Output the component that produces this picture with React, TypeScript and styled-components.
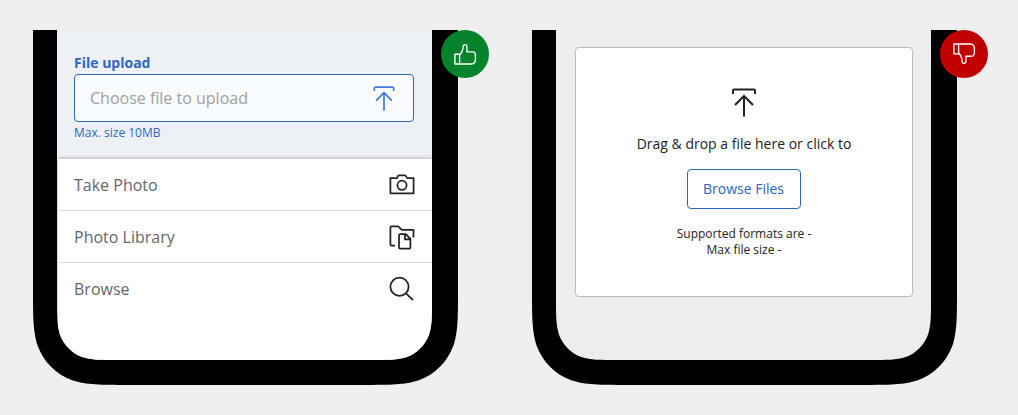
import React from "react";
import styled, { createGlobalStyle } from "styled-components";

const GlobalStyle = createGlobalStyle`
  * { box-sizing: border-box; }
  body { margin: 0; background: #efefef; font-family: "Open Sans", "Noto Sans", sans-serif; }
`;

/* Outline with square top corners and continuous-curvature bottom corners. */
const deviceOutline = (w: number, h: number, r: number) => {
  const p = (right: boolean, x: number, y: number) =>
    `${(right ? w - x * r : x * r).toFixed(2)} ${(h - y * r).toFixed(2)}`;
  return [
    `M0 0H${w}L${p(true, 0, 1.5287)}`,
    `C${p(true, 0, 1.0885)} ${p(true, 0, 0.8684)} ${p(true, 0.0749, 0.6315)}`,
    `C${p(true, 0.1691, 0.3728)} ${p(true, 0.3728, 0.1691)} ${p(true, 0.6315, 0.0749)}`,
    `C${p(true, 0.8684, 0)} ${p(true, 1.0885, 0)} ${p(true, 1.5287, 0)}`,
    `L${p(false, 1.5287, 0)}`,
    `C${p(false, 1.0885, 0)} ${p(false, 0.8684, 0)} ${p(false, 0.6315, 0.0749)}`,
    `C${p(false, 0.3728, 0.1691)} ${p(false, 0.1691, 0.3728)} ${p(false, 0.0749, 0.6315)}`,
    `C${p(false, 0, 0.8684)} ${p(false, 0, 1.0885)} ${p(false, 0, 1.5287)}Z`,
  ].join("");
};

const Page = styled.main`
  display: flex;
  gap: 74px;
  width: 1018px;
  height: 415px;
  padding: 30px 0 0 33px;
  background: #efefef;
`;

const Example = styled.section`
  position: relative;
  width: 425px;
  height: 355px;
`;

const Device = styled.div`
  width: 425px;
  height: 355px;
  padding: 0 26px 25px 24px;
  background: #000;
  clip-path: path("${deviceOutline(425, 355, 62)}");
`;

const Screen = styled.div<{ $bg: string }>`
  display: flex;
  flex-direction: column;
  width: 375px;
  height: 330px;
  background: ${(p) => p.$bg};
  clip-path: path("${deviceOutline(375, 330, 40)}");
`;

const Verdict = styled.div<{ $color: string }>`
  position: absolute;
  top: 0;
  right: -31px;
  display: grid;
  place-items: center;
  width: 48px;
  height: 48px;
  border-radius: 50%;
  background: ${(p) => p.$color};
`;

const Icon = styled.svg<{ $color: string; $weight?: number }>`
  display: block;
  flex: none;
  fill: none;
  stroke: ${(p) => p.$color};
  stroke-width: ${(p) => p.$weight ?? 1.75};
`;

const FieldArea = styled.div`
  height: 129px;
  padding: 23px 18px 0 17px;
  background: #edf1f6;
`;

const Label = styled.label`
  display: block;
  height: 21px;
  font-size: 14px;
  line-height: 20px;
  font-weight: 700;
  color: #2f66c1;
`;

const FileField = styled.div`
  display: flex;
  align-items: center;
  justify-content: space-between;
  height: 48px;
  padding: 0 15px;
  border: 1px solid #2f66c1;
  border-radius: 4px;
  background: #f8fcff;
  font-size: 16px;
  line-height: 24px;
  color: #a0a0a0;
`;

const Hint = styled.div`
  margin-top: 3px;
  font-size: 12px;
  line-height: 16px;
  color: #2f66c1;
`;

const Sheet = styled.ul`
  flex: 1;
  margin: 0 0 0 1px;
  padding: 0;
  list-style: none;
  background: #fff;
  box-shadow: 0 0 4px rgba(0, 0, 0, 0.4);
`;

const SheetRow = styled.li`
  display: flex;
  align-items: center;
  justify-content: space-between;
  height: 52px;
  padding: 0 17px 0 16px;
  border-bottom: 1px solid #dcdcdc;
  font-size: 16px;
  color: #666;
  &:last-child { border-bottom-color: transparent; }
`;

const DropCard = styled.div`
  display: flex;
  flex-direction: column;
  align-items: center;
  width: 338px;
  height: 250px;
  margin: 17px 0 0 19px;
  padding-top: 38px;
  border: 1px solid #bcbcbc;
  border-radius: 4px;
  background: #fff;
  color: #222;
`;

const Prompt = styled.p`
  margin: 16px 0 0;
  font-size: 14px;
  line-height: 20px;
`;

const BrowseButton = styled.button`
  width: 114px;
  height: 40px;
  margin: 15px 0 0;
  padding: 0 1px 0 0;
  border: 1px solid #2f66c1;
  border-radius: 4px;
  background: #fff;
  font: 14px/20px "Open Sans", "Noto Sans", sans-serif;
  color: #2f66c1;
`;

const Formats = styled.p`
  margin: 17px 0 0;
  font-size: 12px;
  line-height: 16px;
  text-align: center;
`;

const UploadIcon = ({ color, size, weight }: { color: string; size: number; weight: number }) => (
  <Icon $color={color} $weight={weight} width={size} height={size} viewBox="0 0 32 32">
    <path d="M5 8V4.5Q5 3.5 6 3.5H26Q27 3.5 27 4.5V8M16 30.6V10M7 19L16 10L25 19" />
  </Icon>
);

const ThumbIcon = ({ down }: { down?: boolean }) => (
  <Icon $color="#fff" $weight={1.35} width={24} height={24} viewBox="0 0 24 24" strokeLinejoin="round">
    <path
      transform={down ? "matrix(1 0 0 -1 0 24)" : undefined}
      d="M1.9 12.2H6.6V22H1.9ZM6.6 13.2C8.2 11.4 9.3 9.4 9.7 7.6C10.1 6.4 10 5.3 10.2 4Q10.4 2.6 12 2.6Q13.7 2.6 13.9 4.3V9.8H19.6Q22.6 10 22.4 13.4V17.5Q22.2 21.8 18.6 22H6.6"
    />
  </Icon>
);

const CameraIcon = () => (
  <Icon $color="#222" width={26} height={26} viewBox="0 0.5 26 26" strokeLinejoin="round">
    <path d="M1.4 6.5H7.8Q8.5 6.2 8.7 5Q9 3.8 10 3.8H15.8Q16.8 3.8 17.2 5Q17.5 6.2 18.2 6.5H24.6V21.8H1.4Z" />
    <circle cx="13" cy="13.8" r="4.6" />
  </Icon>
);

const LibraryIcon = () => (
  <Icon $color="#222" width={26} height={26} viewBox="0 0 26 26" strokeLinejoin="round">
    <path d="M6 21.5H2.3Q1.4 21.5 1.4 20.6V3.2Q1.4 2.3 2.3 2.3H9.2L12.8 5.8H24.5V13.5" />
    <path d="M11 10.2H16.8L21.4 14.9V23.6Q21.4 24.6 20.4 24.6H11Q10 24.6 10 23.6V11.2Q10 10.2 11 10.2ZM16 10.4V15.4H21.2" />
  </Icon>
);

const SearchIcon = () => (
  <Icon $color="#222" width={26} height={26} viewBox="0 0 26 26">
    <circle cx="10.5" cy="10.7" r="9.1" />
    <path d="M16.8 17.2L24 24.2" />
  </Icon>
);

export default function App() {
  return (
    <Page>
      <GlobalStyle />
      <Example>
        <Device>
          <Screen $bg="#fff">
            <FieldArea>
              <Label>File upload</Label>
              <FileField>
                Choose file to upload
                <UploadIcon color="#3c7bdb" size={28} weight={1.9} />
              </FileField>
              <Hint>Max. size 10MB</Hint>
            </FieldArea>
            <Sheet>
              <SheetRow>Take Photo<CameraIcon /></SheetRow>
              <SheetRow>Photo Library<LibraryIcon /></SheetRow>
              <SheetRow>Browse<SearchIcon /></SheetRow>
            </Sheet>
          </Screen>
        </Device>
        <Verdict $color="#04832b"><ThumbIcon /></Verdict>
      </Example>
      <Example>
        <Device>
          <Screen $bg="#ededed">
            <DropCard>
              <UploadIcon color="#222" size={32} weight={2} />
              <Prompt>Drag &amp; drop a file here or click to</Prompt>
              <BrowseButton>Browse Files</BrowseButton>
              <Formats>Supported formats are -<br />Max file size -</Formats>
            </DropCard>
          </Screen>
        </Device>
        <Verdict $color="#c00000"><ThumbIcon down /></Verdict>
      </Example>
    </Page>
  );
}
